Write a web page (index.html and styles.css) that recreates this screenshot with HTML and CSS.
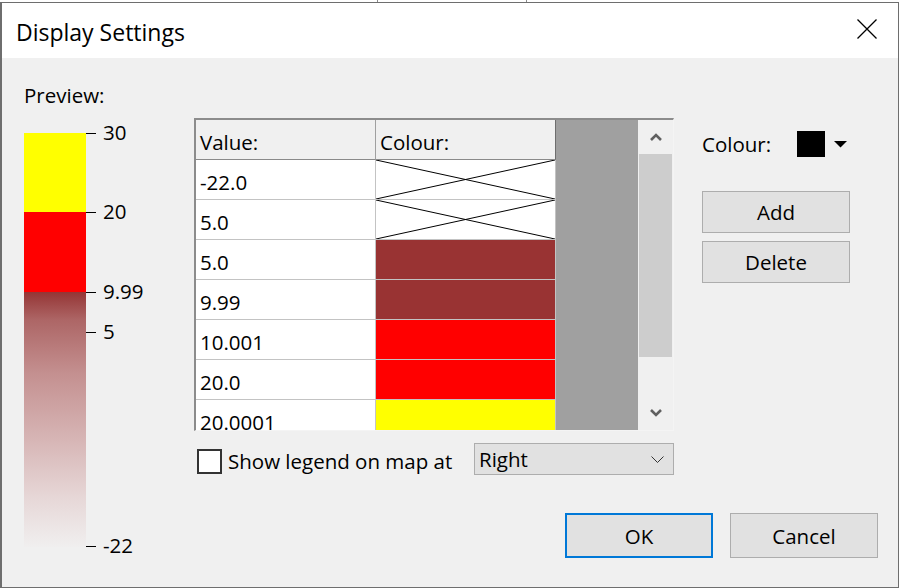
FILE: index.html
```html
<!DOCTYPE html>
<html>
<head>
<meta charset="utf-8">
<title>Display Settings</title>
<link rel="stylesheet" href="styles.css">
</head>
<body>
<div class="backdrop"></div>
<div class="window">
  <div class="titlebar">
    <span class="title">Display Settings</span>
    <svg class="close" width="20" height="20" viewBox="0 0 20 20"><path d="M0.5 0.5 L19.5 19.5 M19.5 0.5 L0.5 19.5" stroke="#000" stroke-width="1.3" fill="none"/></svg>
  </div>
  <div class="content">
    <div class="left">
      <div class="preview-label">Preview:</div>
      <div class="legend">
        <div class="bar">
          <div class="seg seg-yellow"></div>
          <div class="seg seg-red"></div>
          <div class="seg seg-grad"></div>
        </div>
        <div class="tick" style="top:0px"><span class="tick-label">30</span></div>
        <div class="tick" style="top:79px"><span class="tick-label">20</span></div>
        <div class="tick" style="top:159px"><span class="tick-label">9.99</span></div>
        <div class="tick" style="top:199px"><span class="tick-label">5</span></div>
        <div class="tick" style="top:413px"><span class="tick-label">-22</span></div>
      </div>
    </div>
    <div class="main">
      <div class="top">
        <div class="tablebox">
          <div class="grid">
            <div class="row header">
              <div class="cell val">Value:</div>
              <div class="cell col">Colour:</div>
            </div>
            <div class="row">
              <div class="cell val">-22.0</div>
              <div class="cell col cross"><svg viewBox="0 0 100 100" preserveAspectRatio="none"><path d="M0 0 L100 100 M0 100 L100 0" stroke="#000" stroke-width="1" vector-effect="non-scaling-stroke" fill="none"/></svg></div>
            </div>
            <div class="row">
              <div class="cell val">5.0</div>
              <div class="cell col cross"><svg viewBox="0 0 100 100" preserveAspectRatio="none"><path d="M0 0 L100 100 M0 100 L100 0" stroke="#000" stroke-width="1" vector-effect="non-scaling-stroke" fill="none"/></svg></div>
            </div>
            <div class="row">
              <div class="cell val">5.0</div>
              <div class="cell col c-dark"></div>
            </div>
            <div class="row">
              <div class="cell val">9.99</div>
              <div class="cell col c-dark"></div>
            </div>
            <div class="row">
              <div class="cell val">10.001</div>
              <div class="cell col c-red"></div>
            </div>
            <div class="row">
              <div class="cell val">20.0</div>
              <div class="cell col c-red"></div>
            </div>
            <div class="row">
              <div class="cell val">20.0001</div>
              <div class="cell col c-yellow"></div>
            </div>
          </div>
          <div class="scrollbar">
            <div class="sb-btn">
              <svg width="12" height="8" viewBox="0 0 12 8"><path d="M1 7 L6 2 L11 7" stroke="#606060" stroke-width="2.6" fill="none"/></svg>
            </div>
            <div class="sb-thumb"></div>
            <div class="sb-track"></div>
            <div class="sb-btn">
              <svg width="12" height="8" viewBox="0 0 12 8"><path d="M1 1 L6 6 L11 1" stroke="#606060" stroke-width="2.6" fill="none"/></svg>
            </div>
          </div>
        </div>
        <div class="side">
          <div class="colour-row">
            <span class="colour-label">Colour:</span>
            <span class="swatch"></span>
            <svg class="drop-tri" width="13" height="7" viewBox="0 0 13 7"><path d="M0 0 L13 0 L6.5 6.5 Z" fill="#000"/></svg>
          </div>
          <div class="btn side-btn add-btn">Add</div>
          <div class="btn side-btn">Delete</div>
        </div>
      </div>
      <div class="options">
        <span class="checkbox"></span>
        <span class="check-label">Show legend on map at</span>
        <div class="select">
          <span class="select-text">Right</span>
          <svg class="select-chev" width="13" height="7" viewBox="0 0 13 7"><path d="M0.5 0.5 L6.5 6.5 L12.5 0.5" stroke="#333" stroke-width="1" fill="none"/></svg>
        </div>
      </div>
      <div class="footer">
        <div class="btn dlg-btn ok">OK</div>
        <div class="btn dlg-btn">Cancel</div>
      </div>
    </div>
  </div>
</div>
</body>
</html>
```
FILE: styles.css
```css
* { box-sizing: border-box; }
html, body { margin: 0; padding: 0; }
body {
  width: 900px;
  height: 588px;
  overflow: hidden;
  background: #ffffff;
  font-family: "Open Sans", "Noto Sans", sans-serif;
  font-size: 20.5px;
  color: #000;
}
.backdrop {
  height: 2px;
  background:
    linear-gradient(to right, transparent 377px, #8a8a8a 377px, #8a8a8a 378px, transparent 378px, transparent 526px, #8a8a8a 526px, #8a8a8a 527px, transparent 527px),
    #ffffff;
}
.window {
  width: 899px;
  height: 586px;
  border: 1px solid #6e6e6e;
  border-left-width: 2px;
  display: flex;
  flex-direction: column;
  background: #f0f0f0;
}
.titlebar {
  height: 55px;
  background: #ffffff;
  display: flex;
  align-items: center;
  padding-left: 14px;
  padding-right: 21px;
  flex: none;
}
.title {
  font-size: 23px;
  line-height: 30px;
  flex: 1;
  padding-top: 2px;
}
.close { display: block; margin-bottom: 3px; }

.content {
  flex: 1;
  display: flex;
  min-height: 0;
}
.left {
  width: 192px;
  flex: none;
  padding-left: 22px;
  padding-top: 25px;
}
.preview-label {
  line-height: 24px;
  height: 24px;
}
.legend {
  position: relative;
  margin-top: 26px;
  height: 420px;
}
.bar {
  width: 62px;
  display: flex;
  flex-direction: column;
}
.seg-yellow { height: 79px; background: #ffff00; }
.seg-red { height: 80px; background: #ff0000; }
.seg-grad {
  height: 255px;
  background: linear-gradient(to bottom, #953535 0%, #ad6666 11%, #c49090 32%, #d6b4b4 57%, #e6d6d6 80%, #f0efef 100%);
}
.tick {
  position: absolute;
  left: 62px;
  width: 10px;
  height: 1px;
  background: #000;
}
.tick-label {
  position: absolute;
  left: 17px;
  top: -14px;
  line-height: 26px;
  white-space: nowrap;
}

.main {
  flex: 1;
  display: flex;
  flex-direction: column;
  padding-top: 60px;
}
.top {
  display: flex;
  align-items: flex-start;
}
.tablebox {
  width: 480px;
  height: 313px;
  display: flex;
  border-style: solid;
  border-width: 2px 1px 1px 2px;
  border-color: #8c8c8c #f4f4f4 #f4f4f4 #8c8c8c;
  overflow: hidden;
  flex: none;
}
.grid {
  width: 442px;
  height: 100%;
  background: #a0a0a0;
  overflow: hidden;
  flex: none;
}
.row {
  display: flex;
  width: 360px;
  height: 40px;
  flex: none;
}
.cell {
  height: 40px;
  border-bottom: 1px solid #c3c3c3;
  border-right: 1px solid #c3c3c3;
  line-height: 39px;
  padding-top: 3px;
  overflow: hidden;
  white-space: nowrap;
}
.val {
  width: 180px;
  background: #ffffff;
  padding-left: 4px;
}
.col {
  width: 180px;
  background: #ffffff;
}
.header .cell {
  background: #f0f0f0;
  border-bottom-color: #8a8a8a;
}
.header .col {
  padding-left: 4px;
  border-right-color: #6e6e6e;
}
.header .val { border-right-color: #a0a0a0; }
.cross { position: relative; padding-top: 0; }
.cross svg { display: block; width: 179px; height: 39px; }
.c-dark { background: #993333; }
.c-red { background: #ff0000; }
.c-yellow { background: #ffff00; }

.scrollbar {
  width: 35px;
  flex: none;
  height: 100%;
  background: #f0f0f0;
  display: flex;
  flex-direction: column;
  align-items: center;
}
.sb-btn {
  height: 34px;
  width: 100%;
  display: flex;
  align-items: center;
  justify-content: center;
  flex: none;
}
.sb-btn svg { display: block; }
.sb-thumb {
  width: 33px;
  height: 203px;
  background: #cdcdcd;
  flex: none;
}
.sb-track { flex: 1; }

.side {
  margin-left: 28px;
  padding-top: 13px;
  display: flex;
  flex-direction: column;
}
.colour-row {
  display: flex;
  align-items: center;
  height: 26px;
}
.colour-label {
  width: 95px;
  line-height: 26px;
}
.swatch {
  width: 28px;
  height: 26px;
  background: #000;
}
.drop-tri { margin-left: 9px; margin-top: 1px; display: block; }
.btn {
  background: #e1e1e1;
  border: 1px solid #adadad;
  display: flex;
  align-items: center;
  justify-content: center;
}
.side-btn {
  width: 148px;
  height: 42px;
}
.add-btn { margin-top: 34px; margin-bottom: 8px; }

.options {
  width: 480px;
  height: 32px;
  margin-top: 12px;
  display: flex;
  align-items: center;
}
.checkbox {
  width: 25px;
  height: 25px;
  margin-left: 3px;
  margin-top: 4px;
  border: 2px solid #333333;
  background: #ffffff;
  flex: none;
}
.check-label {
  margin-left: 6px;
  margin-top: 4px;
  white-space: nowrap;
}
.select {
  margin-left: auto;
  width: 200px;
  height: 32px;
  background: #e1e1e1;
  border: 1px solid #adadad;
  display: flex;
  align-items: center;
  padding-left: 4px;
  padding-right: 9px;
}
.select-text { flex: 1; }
.select-chev { display: block; }

.footer {
  margin-top: 38px;
  display: flex;
  justify-content: flex-end;
  gap: 17px;
  padding-right: 20px;
}
.dlg-btn {
  width: 148px;
  height: 45px;
}
.ok {
  border: 2px solid #0078d7;
}
```
